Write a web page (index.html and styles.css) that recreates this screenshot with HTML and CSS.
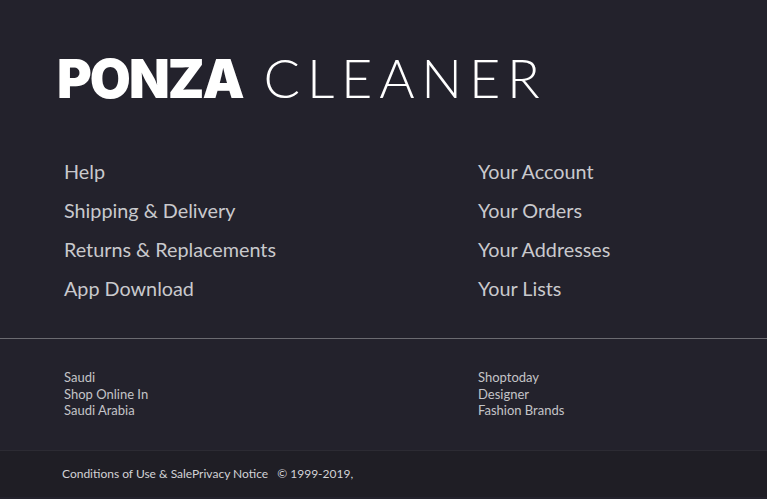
FILE: index.html
```html
<!DOCTYPE html>
<html lang="en"><head>
  <meta charset="UTF-8"><meta name="viewport" content="width=device-width, initial-scale=1.0">
  <title>Ponza Cleaner</title>
  <link rel="stylesheet" href="styles.css">
</head><body>

<footer class="site-footer">
  <div class="brand">
    <span class="brand-bold">PONZA</span><span class="brand-light">CLEANER</span>
  </div>

  <div class="links">
    <ul class="link-col">
      <li><a href="#">Help</a></li>
      <li><a href="#">Shipping &amp; Delivery</a></li>
      <li><a href="#">Returns &amp; Replacements</a></li>
      <li><a href="#">App Download</a></li>
    </ul>
    <ul class="link-col">
      <li><a href="#">Your Account</a></li>
      <li><a href="#">Your Orders</a></li>
      <li><a href="#">Your Addresses</a></li>
      <li><a href="#">Your Lists</a></li>
    </ul>
  </div>

  <div class="regions">
    <div class="region">Saudi<br>Shop Online In<br>Saudi Arabia</div>
    <div class="region">Shoptoday<br>Designer<br>Fashion Brands</div>
  </div>

  <div class="legal">
    <a href="#">Conditions of Use &amp; Sale</a><a href="#">Privacy Notice</a>
    <span class="copy">&copy; 1999-2019,</span>
  </div>
</footer>

</body></html>
```

FILE: styles.css
```css
body{margin:0;background:#23222c;font-family:'Lato','Liberation Sans',sans-serif;}
a{color:inherit;text-decoration:none;}
.site-footer{background:#23222c;color:#c9c9cd;}
.brand{padding:51px 0 0 57px;height:60px;display:flex;align-items:baseline;color:#fff;line-height:1;}
.brand-bold{font-family:'Inter',sans-serif;font-weight:900;font-size:53px;letter-spacing:-2px;}
.brand-light{font-family:'Lato',sans-serif;font-weight:300;font-size:54px;letter-spacing:6.8px;margin-left:21px;}
.links{display:grid;grid-template-columns:414px 1fr;padding:41px 0 30px 64px;border-bottom:1px solid #6b6b71;}
.link-col{list-style:none;margin:0;padding:0;}
.link-col li{font-size:19.8px;line-height:39px;}
.regions{display:grid;grid-template-columns:414px 1fr;padding:30px 0 31px 64px;font-size:13px;line-height:16.5px;color:#c4c4c8;}
.legal{background:#1f1e25;border-top:1px solid #2c2b33;padding:15px 62px 16px;font-size:12px;color:#d2d2d6;}
.copy{margin-left:6px;}
```
